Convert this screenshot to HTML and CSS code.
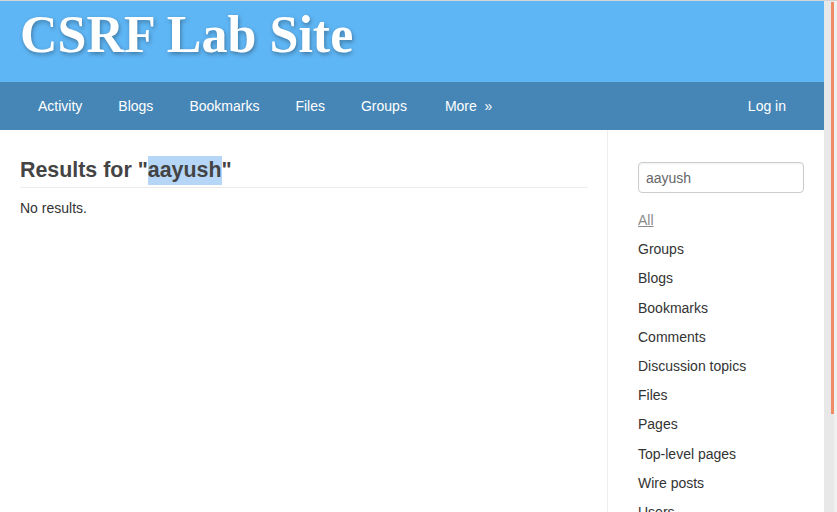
FILE: index.html
```html
<!DOCTYPE html>
<html lang="en">
<head>
<meta charset="utf-8">
<title>CSRF Lab Site</title>
<link rel="stylesheet" href="styles.css">
</head>
<body>
<div class="window">
  <div class="page">
    <header class="site-header">
      <h1 class="site-name">CSRF Lab Site</h1>
    </header>
    <nav class="navbar">
      <ul class="nav-main">
        <li>Activity</li>
        <li>Blogs</li>
        <li>Bookmarks</li>
        <li>Files</li>
        <li>Groups</li>
        <li class="more">More&nbsp; &raquo;</li>
      </ul>
      <ul class="nav-alt">
        <li>Log in</li>
      </ul>
    </nav>
    <div class="layout">
      <main class="main">
        <h2 class="title">Results for "<span class="sel">aayush</span>"</h2>
        <p class="empty">No results.</p>
      </main>
      <aside class="sidebar">
        <div class="search-box">aayush</div>
        <ul class="filter">
          <li class="active">All</li>
          <li>Groups</li>
          <li>Blogs</li>
          <li>Bookmarks</li>
          <li>Comments</li>
          <li>Discussion topics</li>
          <li>Files</li>
          <li>Pages</li>
          <li>Top-level pages</li>
          <li>Wire posts</li>
          <li>Users</li>
        </ul>
      </aside>
    </div>
  </div>
  <div class="scrollbar">
    <div class="track"><div class="thumb"></div></div>
    <div class="edge"></div>
  </div>
</div>
</body>
</html>
```

FILE: styles.css
```css
html, body {
  margin: 0;
  padding: 0;
  height: 512px;
  overflow: hidden;
  background: #fff;
}

body {
  font-family: "Liberation Sans", Arial, sans-serif;
  font-size: 14px;
  color: #333;
}

.window {
  display: flex;
  height: 511px;
  border-top: 1px solid #d4d4d4;
}

.page {
  flex: 0 0 824px;
  width: 824px;
  display: flex;
  flex-direction: column;
  overflow: hidden;
}

.site-header {
  flex-shrink: 0;
  background: #5fb6f5;
  height: 81px;
  padding: 4px 20px 0;
  box-sizing: border-box;
}

.site-name {
  margin: 0;
  font-family: "Liberation Serif", "Times New Roman", serif;
  font-weight: bold;
  font-size: 52px;
  line-height: 60px;
  color: #fff;
  text-shadow: 1px 2px 4px rgba(0, 0, 0, 0.35);
}

.navbar {
  flex-shrink: 0;
  background: #4686b6;
  height: 48px;
  display: flex;
  justify-content: space-between;
  padding: 0 20px;
}

.nav-main, .nav-alt {
  list-style: none;
  margin: 0;
  padding: 0;
  display: flex;
}

.nav-main li, .nav-alt li {
  color: #fff;
  line-height: 48px;
  padding: 0 18px;
}

.nav-main .more {
  padding-left: 20px;
}

.layout {
  flex: 1 0 auto;
  display: flex;
}

.main {
  width: 568px;
  padding: 26px 19px 0 20px;
}

.title {
  margin: 0;
  font-size: 21.4px;
  line-height: 29px;
  font-weight: bold;
  color: #444;
  padding-bottom: 2px;
  border-bottom: 1px solid #ebebeb;
}

.sel {
  display: inline-block;
  background: #b5d6f6;
  line-height: 29px;
}

.empty {
  margin: 10px 0 0;
  line-height: 20px;
}

.sidebar {
  flex: 1;
  border-left: 1px solid #eee;
  padding: 32px 20px 0 30px;
}

.search-box {
  height: 31px;
  box-sizing: border-box;
  border: 1px solid #ccc;
  border-radius: 4px;
  box-shadow: inset 0 1px 2px rgba(0, 0, 0, 0.06);
  padding: 0 7px;
  line-height: 30px;
  color: #666;
}

.filter {
  list-style: none;
  margin: 13px 0 0;
  padding: 0;
}

.filter li {
  line-height: 29.2px;
  color: #333;
}

.filter li.active {
  color: #8a8a8a;
  text-decoration: underline;
}

.scrollbar {
  flex: 1;
  display: flex;
  background: #e8e8e8;
}

.track {
  flex: 1;
  display: flex;
  justify-content: flex-end;
  padding-top: 1px;
}

.thumb {
  width: 3px;
  height: 412px;
  background: #ef8c67;
}

.edge {
  width: 3px;
  background: #f0f0f0;
}
```
